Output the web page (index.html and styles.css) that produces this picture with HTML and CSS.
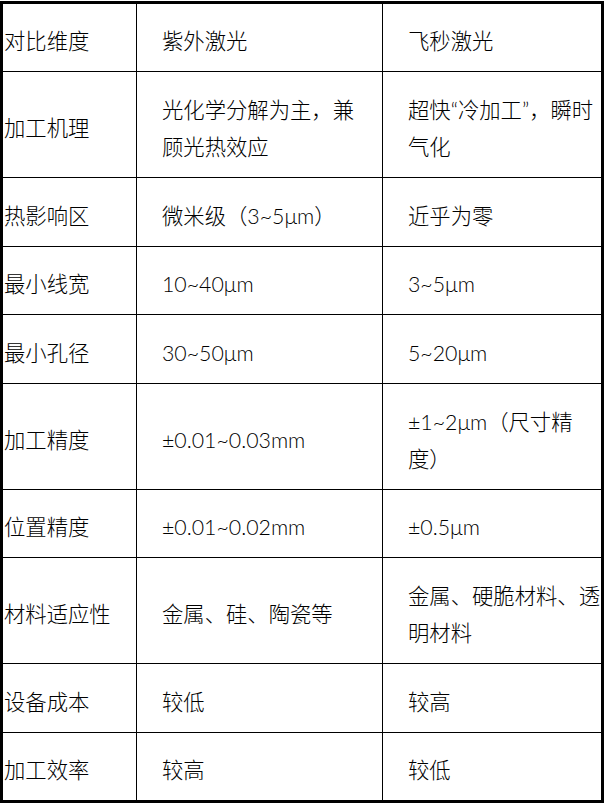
FILE: index.html
```html
<!DOCTYPE html>
<html lang="zh-CN">
<head>
<meta charset="utf-8">
<title>紫外激光与飞秒激光对比</title>
<link rel="stylesheet" href="styles.css">
</head>
<body>
<div class="table">
  <div class="cell c1 r-h">对比维度</div>
  <div class="cell c2 r-h">紫外激光</div>
  <div class="cell c3 r-h">飞秒激光</div>

  <div class="cell c1">加工机理</div>
  <div class="cell c2">光化学分解为主，兼顾光热效应</div>
  <div class="cell c3">超快“冷加工”，瞬时气化</div>

  <div class="cell c1">热影响区</div>
  <div class="cell c2">微米级（3~5μm）</div>
  <div class="cell c3">近乎为零</div>

  <div class="cell c1">最小线宽</div>
  <div class="cell c2">10~40μm</div>
  <div class="cell c3">3~5μm</div>

  <div class="cell c1">最小孔径</div>
  <div class="cell c2">30~50μm</div>
  <div class="cell c3">5~20μm</div>

  <div class="cell c1">加工精度</div>
  <div class="cell c2">±0.01~0.03mm</div>
  <div class="cell c3">±1~2μm（尺寸精度）</div>

  <div class="cell c1">位置精度</div>
  <div class="cell c2">±0.01~0.02mm</div>
  <div class="cell c3">±0.5μm</div>

  <div class="cell c1">材料适应性</div>
  <div class="cell c2">金属、硅、陶瓷等</div>
  <div class="cell c3">金属、硬脆材料、透明材料</div>

  <div class="cell c1">设备成本</div>
  <div class="cell c2">较低</div>
  <div class="cell c3">较高</div>

  <div class="cell c1 last">加工效率</div>
  <div class="cell c2 last">较高</div>
  <div class="cell c3 last">较低</div>
</div>
</body>
</html>
```
FILE: styles.css
```css
html, body {
  margin: 0;
  padding: 0;
  background: #ffffff;
}

body {
  padding-top: 1px;
  font-family: "Lato", "Noto Sans CJK SC", sans-serif;
  font-size: 21.33px;
  font-weight: 300;
  line-height: 37px;
  color: #000000;
}

.table {
  width: 604px;
  box-sizing: border-box;
  border: 3px solid #000000;
  display: grid;
  grid-template-columns: 134px 246px 218px;
  grid-template-rows: 68px 106px 69px 68px 69px 106px 68px 106px 69px 67px;
}

.cell {
  box-sizing: border-box;
  display: flex;
  align-items: center;
  padding-top: 8px;
  border-bottom: 1px solid #000000;
}

.cell.last {
  border-bottom: none;
}

.c1 {
  border-right: 1px solid #000000;
  padding-left: 1px;
}

.c2 {
  border-right: 1px solid #000000;
  padding-left: 25px;
  padding-right: 25px;
}

.c3 {
  padding-left: 25px;
  padding-right: 0;
}
```
